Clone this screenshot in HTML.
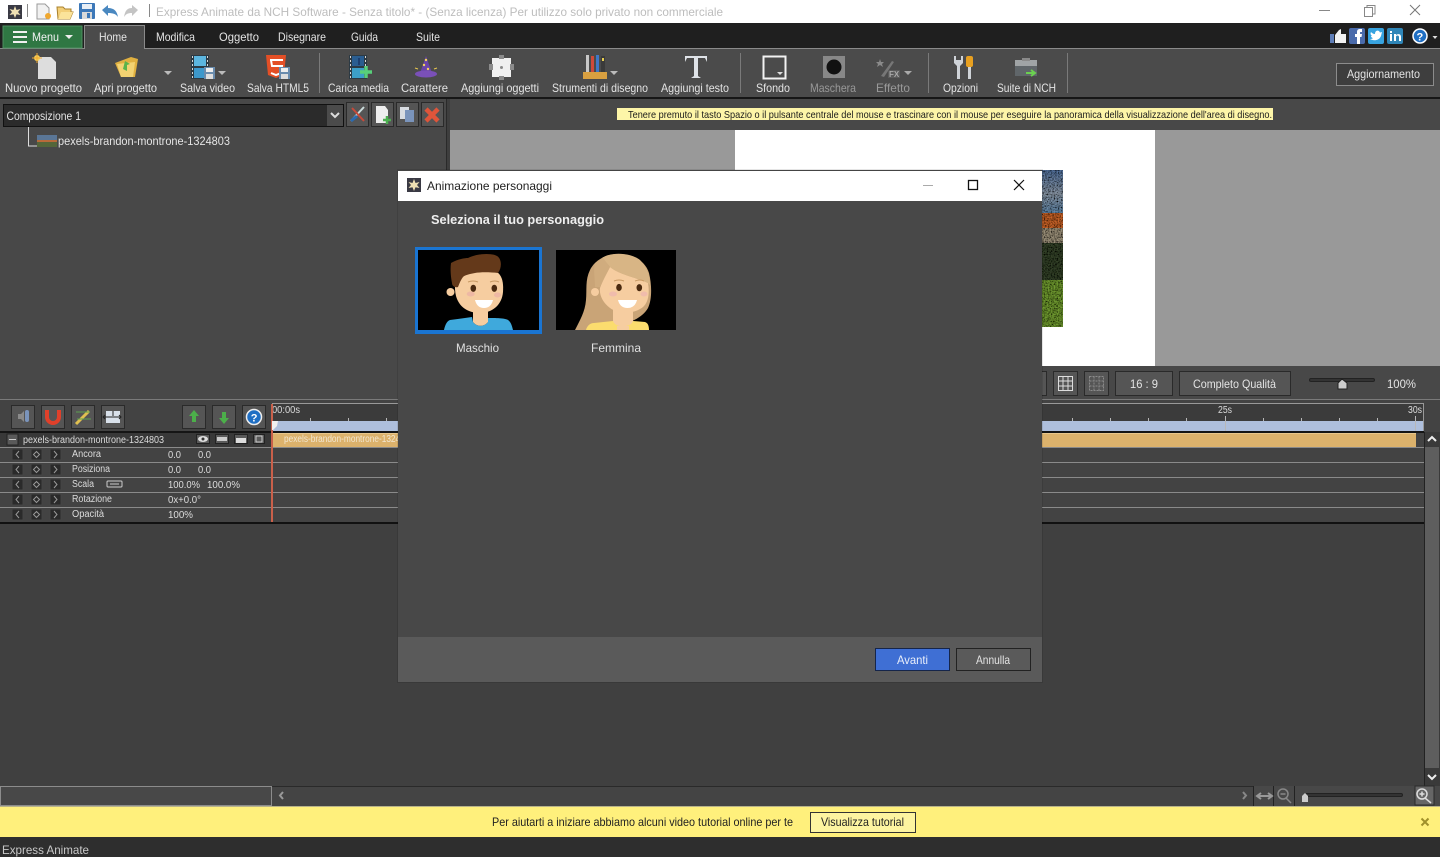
<!DOCTYPE html>
<html lang="it"><head><meta charset="utf-8"><title>Express Animate</title>
<style>
html,body{margin:0;padding:0;background:#404040;overflow:hidden}
svg{display:block;position:absolute;left:0;top:0}
text{font-family:"Liberation Sans",sans-serif;font-size:12px;fill:#e4e4e4;white-space:pre}
.s{font-size:10px;fill:#dcdcdc}
.d{fill:#999}
</style></head><body>
<svg width="1440" height="857" viewBox="0 0 1440 857" xmlns="http://www.w3.org/2000/svg">
<defs>
<filter id="grain" x="0" y="0" width="100%" height="100%"><feTurbulence type="fractalNoise" baseFrequency="0.7" numOctaves="2" seed="4"/><feColorMatrix values="0 0 0 0 0  0 0 0 0 0  0 0 0 0 0  0 0 0 -2.200 1.500"/><feComposite in2="SourceGraphic" operator="in"/><feMerge><feMergeNode in="SourceGraphic"/><feMergeNode/></feMerge></filter>
<linearGradient id="sky" x1="0" y1="0" x2="0" y2="1"><stop offset="0" stop-color="#51709c"/><stop offset=".55" stop-color="#8a97a6"/><stop offset="1" stop-color="#5f85a8"/></linearGradient>
<linearGradient id="clip" x1="0" y1="0" x2="1" y2="0"><stop offset="0" stop-color="#d8a468"/><stop offset="1" stop-color="#dcb26c"/></linearGradient>
</defs>
<!-- base -->
<rect width="1440" height="857" fill="#404040"/>
<rect width="1440" height="23" fill="#fff"/>
<rect y="23" width="1440" height="25" fill="#1f1f1f"/>
<rect y="48" width="1440" height="49" fill="#4b4b4b"/>
<rect y="48" width="1440" height="1" fill="#8a8a8a"/>
<rect y="97" width="1440" height="2" fill="#161616"/>
<!-- title bar -->
<rect x="8" y="5" width="14" height="14" fill="#3a3a44"/>
<path d="M15 6l1.500 4 4-1-2.500 3 2.500 3-4-.8L15 18l-1.500-3.800-4 .8 2.500-3-2.500-3 4 1z" fill="#efe0b4"/>
<rect x="27" y="4" width="1" height="13" fill="#888"/>
<path d="M37 4h8l4 4v11H37z" fill="#f1f1f1" stroke="#9a9a9a"/><circle cx="48" cy="16" r="3" fill="#f0a830"/>
<path d="M57 7h6l2 2h6v3h2l-3 7H58z" fill="#f3cf78" stroke="#a8802c"/><path d="M61 12h12l-3 7H58z" fill="#fbe39a"/>
<rect x="79" y="3" width="16" height="16" rx="1" fill="#3d78b8"/><rect x="82" y="4" width="10" height="5" fill="#e8eef5"/><rect x="82" y="12" width="10" height="7" fill="#d9d9d9"/><rect x="87" y="13" width="3" height="5" fill="#3d78b8"/>
<path d="M102 10l6-5v3c6 0 9 3 10 9-2-3-5-4-10-4v3z" fill="#4a88c0"/>
<path d="M138 10l-6-5v3c-5 0-7 3-8 9 2-3 4-4 8-4v3z" fill="#c4c4c4"/>
<rect x="149" y="4" width="1" height="13" fill="#888"/>
<text x="156" y="16" textLength="567" lengthAdjust="spacingAndGlyphs" style="fill:#bdbdbd">Express Animate da NCH Software - Senza titolo* - (Senza licenza) Per utilizzo solo privato non commerciale</text>
<rect x="1319" y="10" width="11" height="1" fill="#888"/>
<path d="M1364.500 7.500h8v9h-8zM1367 7.500V5.500h8v8.500h-2.500" fill="none" stroke="#888"/>
<path d="M1410 5l10 10M1420 5l-10 10" stroke="#777" fill="none"/>
<!-- menu tabs -->
<path d="M3 48V26h79v22z" fill="#2f7743" stroke="#4f8f61"/>
<path d="M13 32h14M13 37h14M13 42h14" stroke="#f0f0f0" stroke-width="2"/>
<text x="32" y="41" textLength="27" lengthAdjust="spacingAndGlyphs" style="fill:#f2f2f2">Menu</text>
<path d="M65 35h8l-4 4z" fill="#eee"/>
<rect x="84" y="25" width="61" height="24" fill="#4b4b4b"/>
<path d="M84.500 49V25.500h60V49" fill="none" stroke="#8a8a8a"/>
<text x="99" y="41" textLength="28" lengthAdjust="spacingAndGlyphs">Home</text>
<text x="156" y="41" textLength="39" lengthAdjust="spacingAndGlyphs">Modifica</text>
<text x="219" y="41" textLength="40" lengthAdjust="spacingAndGlyphs">Oggetto</text>
<text x="278" y="41" textLength="48" lengthAdjust="spacingAndGlyphs">Disegnare</text>
<text x="351" y="41" textLength="27" lengthAdjust="spacingAndGlyphs">Guida</text>
<text x="416" y="41" textLength="24" lengthAdjust="spacingAndGlyphs">Suite</text>
<!-- social -->
<rect x="1330" y="34" width="4" height="9" fill="#5f7eb8"/><path d="M1335 35l4-5 2-1v5h5v9h-11z" fill="#f2f2f2"/>
<rect x="1349" y="28" width="16" height="16" rx="2" fill="#4a6bab"/><path d="M1357 44v-7h-2v-3h2v-2c0-2 1-3 3-3h2v3h-1c-1 0-1 0-1 1v1h2l-.5 3H1360v7z" fill="#fff"/>
<rect x="1368" y="28" width="16" height="16" rx="2" fill="#37a3e0"/><path d="M1370 39c3 2 9 2 11-3l1-4-2 .5-1-1.500c-2-1-4 0-4 3-2 0-3-1-4-2-1 2 0 3 1 4l-1 0c0 1 1 2 2 2-1 1-2 1-3 1z" fill="#fff"/>
<rect x="1387" y="28" width="16" height="16" rx="2" fill="#2f86b8"/><path d="M1390 34h2v7h-2zM1390 31h2v2h-2zM1394 34h2v1c1-1 5-2 5 2v4h-2v-4c0-2-3-2-3 0v4h-2z" fill="#fff"/>
<circle cx="1420" cy="36" r="7" fill="#1f6fc4" stroke="#fff" stroke-width="1.500"/>
<text x="1416.500" y="40.500" style="font-size:11px;font-weight:bold;fill:#fff">?</text>
<path d="M1432.500 36h5l-2.500 3z" fill="#ddd"/>
<!-- toolbar icons -->
<path d="M38 57h13l5 5v17H38z" fill="#ddd"/><circle cx="37" cy="58" r="3" fill="#f6d25c"/><path d="M37 53v10M32 58h10" stroke="#f0a830"/>
<path d="M115 63l16-6 7 2-3 18h-14z" fill="#e0b040"/><path d="M117 64l18-2-2 15h-12z" fill="#f2d272"/><path d="M123 69l2-8 5 3-3 1 0 6z" fill="#5ab44a"/>
<path d="M164 71h8l-4 4z" fill="#bbb"/>
<rect x="191" y="55" width="18" height="24" fill="#2c3a44"/><rect x="194" y="56" width="12" height="10" fill="#5cb6e0"/><rect x="194" y="68" width="12" height="10" fill="#3c98cc"/><path d="M192.500 56v23M207.500 56v23" stroke="#d8d8d8" stroke-dasharray="2 2"/><rect x="204" y="67" width="11" height="12" fill="#6a8cae"/><rect x="206" y="68" width="7" height="4" fill="#eee"/><rect x="206" y="74" width="7" height="5" fill="#ddd"/>
<path d="M218 71h8l-4 4z" fill="#bbb"/>
<path d="M266 55h20l-2 20-8 3-8-3z" fill="#e34f26"/><path d="M270 60h13M271 60l1 6h10l-1 7-5 2-5-2" fill="none" stroke="#fff" stroke-width="2"/><rect x="279" y="67" width="11" height="12" fill="#6a8cae"/><rect x="281" y="68" width="7" height="4" fill="#eee"/><rect x="281" y="74" width="7" height="5" fill="#ddd"/>
<rect x="319" y="53" width="1" height="40" fill="#7a7a7a"/>
<rect x="349" y="55" width="18" height="24" fill="#2c3a44"/><rect x="352" y="56" width="12" height="10" fill="#2a5d90"/><rect x="352" y="68" width="12" height="10" fill="#3c9fc8"/><path d="M350.500 56v23M365.500 56v23" stroke="#d8d8d8" stroke-dasharray="2 2"/><path d="M359 58v7" stroke="#1d3f70" stroke-width="2"/><path d="M366 66v12M360 72h12" stroke="#58d07a" stroke-width="3.500"/>
<path d="M426 56l6 17h-12z" fill="#6a45a8"/><ellipse cx="426" cy="74" rx="11" ry="3.500" fill="#7a50b8"/><circle cx="424" cy="65" r="1.200" fill="#f6d25c"/><circle cx="428" cy="69" r="1.200" fill="#f6d25c"/><circle cx="426" cy="60" r="1.200" fill="#f6d25c"/><path d="M415 68l3 1M437 68l-3 1" stroke="#e8c850"/>
<rect x="492" y="58" width="19" height="19" fill="#f0f0f0"/><g fill="#8a8a8a"><rect x="489" y="64" width="4" height="6"/><rect x="510" y="64" width="4" height="6"/><rect x="499" y="55" width="5" height="4"/><rect x="499" y="76" width="5" height="4"/><circle cx="501.500" cy="67.500" r="1.500"/></g>
<rect x="583" y="72" width="24" height="7" fill="#d9a040"/><rect x="586" y="55" width="3" height="17" fill="#c8c8c8"/><rect x="591" y="56" width="3" height="16" fill="#d04a3a"/><rect x="596" y="55" width="3" height="17" fill="#3f78c8"/><rect x="601" y="56" width="4" height="16" fill="#3a3a3a"/><rect x="602" y="58" width="2" height="3" fill="#e8d050"/>
<path d="M610 71h8l-4 4z" fill="#bbb"/>
<path d="M685 56h22v6l-2-4h-7v18l3 2h-10l3-2V58h-7l-2 4z" fill="#dfe3e8"/>
<rect x="740" y="53" width="1" height="40" fill="#7a7a7a"/>
<rect x="763.500" y="56.500" width="22" height="22" fill="#4b4b4b" stroke="#f2f2f2" stroke-width="2"/><path d="M777 72h6l-3 3z" fill="#ddd"/>
<rect x="823" y="56" width="22" height="22" fill="#888"/><circle cx="834" cy="67" r="7.500" fill="#111"/>
<path d="M881 76l11-15 2 1-10 15z" fill="#777"/><path d="M880 59l1 3 3 0-2 2 1 3-3-2-3 2 1-3-2-2 3 0z" fill="#8a8a8a"/><rect x="888" y="70" width="12" height="8" fill="#5c5c5c"/><text x="889" y="77" class="s" style="font-size:8px;font-weight:bold;fill:#aaa">FX</text>
<path d="M904 71h8l-4 4z" fill="#aaa"/>
<rect x="928" y="53" width="1" height="40" fill="#7a7a7a"/>
<path d="M954 56v7l3 3v13h3V66l3-3v-7l-2 0v4h-5v-4z" fill="#cfd3d8"/><rect x="966" y="56" width="7" height="11" rx="2" fill="#e8a020"/><rect x="968" y="67" width="3" height="12" fill="#cfd3d8"/>
<rect x="1015" y="62" width="22" height="14" fill="#60666a"/><rect x="1015" y="60" width="22" height="6" fill="#a0a4a6"/><rect x="1022" y="58" width="8" height="3" fill="#8a8a8a"/><path d="M1026 73h8M1031 70l4 3-4 3" stroke="#6bd050" stroke-width="2" fill="none"/>
<rect x="1067" y="53" width="1" height="40" fill="#7a7a7a"/>
<!-- toolbar labels -->
<text x="5" y="92" textLength="77" lengthAdjust="spacingAndGlyphs">Nuovo progetto</text>
<text x="94" y="92" textLength="63" lengthAdjust="spacingAndGlyphs">Apri progetto</text>
<text x="180" y="92" textLength="55" lengthAdjust="spacingAndGlyphs">Salva video</text>
<text x="247" y="92" textLength="62" lengthAdjust="spacingAndGlyphs">Salva HTML5</text>
<text x="328" y="92" textLength="61" lengthAdjust="spacingAndGlyphs">Carica media</text>
<text x="401" y="92" textLength="47" lengthAdjust="spacingAndGlyphs">Carattere</text>
<text x="461" y="92" textLength="78" lengthAdjust="spacingAndGlyphs">Aggiungi oggetti</text>
<text x="552" y="92" textLength="96" lengthAdjust="spacingAndGlyphs">Strumenti di disegno</text>
<text x="661" y="92" textLength="68" lengthAdjust="spacingAndGlyphs">Aggiungi testo</text>
<text x="756" y="92" textLength="34" lengthAdjust="spacingAndGlyphs">Sfondo</text>
<text x="810" y="92" textLength="46" lengthAdjust="spacingAndGlyphs" class="d">Maschera</text>
<text x="876" y="92" textLength="34" lengthAdjust="spacingAndGlyphs" class="d">Effetto</text>
<text x="943" y="92" textLength="35" lengthAdjust="spacingAndGlyphs">Opzioni</text>
<text x="997" y="92" textLength="59" lengthAdjust="spacingAndGlyphs">Suite di NCH</text>
<rect x="1336.500" y="63.500" width="97" height="22" fill="#3e3e3e" stroke="#8c8c8c"/>
<text x="1347" y="78" textLength="73" lengthAdjust="spacingAndGlyphs">Aggiornamento</text>
<!-- left panel -->
<rect x="0" y="99" width="447" height="301" fill="#484848"/>
<rect x="446" y="99" width="1" height="301" fill="#2a2a2a"/>
<rect x="447" y="99" width="3" height="301" fill="#3e3e3e"/>
<rect x="3.500" y="104.500" width="340" height="22" fill="#2b2b2b" stroke="#111"/>
<rect x="327" y="105" width="16" height="21" fill="#4b4b4b"/>
<path d="M331 113l4 4 4-4" stroke="#ddd" stroke-width="2" fill="none"/>
<text x="6.500" y="120" textLength="74.500" lengthAdjust="spacingAndGlyphs">Composizione 1</text>
<g fill="#555" stroke="#2a2a2a"><rect x="346.500" y="102.500" width="22" height="24"/><rect x="371.500" y="102.500" width="22" height="24"/><rect x="396.500" y="102.500" width="22" height="24"/><rect x="421.500" y="102.500" width="22" height="24"/></g>
<path d="M351 121l13-14" stroke="#cdd" stroke-width="2"/><path d="M364 121l-12-13" stroke="#c84a3a" stroke-width="2"/><path d="M351 121l6-5" stroke="#2a6ab0" stroke-width="3"/>
<path d="M376 106h9l3 4v13h-12z" fill="#eee"/><path d="M387 116v8M383 120h8" stroke="#4caf50" stroke-width="2.500"/>
<rect x="400" y="107" width="9" height="12" fill="#d8dce2"/><rect x="405" y="110" width="9" height="12" fill="#7a94bc"/>
<path d="M426 109l12 12M438 109l-12 12" stroke="#e0553a" stroke-width="4.500"/>
<path d="M28.500 127v19H37" stroke="#ddd" fill="none"/>
<rect x="37" y="135" width="20" height="12" fill="#54663a"/><rect x="37" y="135" width="20" height="5" fill="#5a7696"/><rect x="37" y="140" width="20" height="2" fill="#b86a3a"/>
<text x="58" y="145" textLength="172" lengthAdjust="spacingAndGlyphs">pexels-brandon-montrone-1324803</text>
<!-- preview -->
<rect x="450" y="99" width="990" height="31" fill="#484848"/>
<rect x="617" y="108" width="656" height="12" fill="#fdf5a8"/>
<text x="628" y="118" textLength="644" lengthAdjust="spacingAndGlyphs" style="font-size:10.500px;fill:#1a1a1a">Tenere premuto il tasto Spazio o il pulsante centrale del mouse e trascinare con il mouse per eseguire la panoramica della visualizzazione dell'area di disegno.</text>
<rect x="450" y="130" width="990" height="236" fill="#999"/>
<rect x="735" y="130" width="420" height="236" fill="#fff"/>
<g filter="url(#grain)">
<rect x="1040" y="170" width="23" height="43" fill="url(#sky)"/>
<rect x="1040" y="213" width="23" height="15" fill="#c8642c"/>
<rect x="1040" y="228" width="23" height="15" fill="#9a8f78"/>
<rect x="1040" y="243" width="23" height="37" fill="#34422a"/>
<rect x="1040" y="280" width="23" height="47" fill="#6f9a30"/>
</g>
<!-- controls row -->
<rect x="450" y="366" width="990" height="34" fill="#484848"/>
<rect x="1020" y="371.500" width="26.500" height="24" fill="#555" stroke="#2a2a2a"/>
<rect x="1053.500" y="371.500" width="24" height="24" fill="#555" stroke="#2a2a2a"/>
<path d="M1058.500 376.500h14v14h-14zM1058.500 381h14M1058.500 386h14M1063 376.500v14M1068 376.500v14" fill="none" stroke="#ddd"/>
<rect x="1084.500" y="371.500" width="24" height="24" fill="#555" stroke="#2a2a2a"/>
<path d="M1089.500 376.500h14v14h-14zM1089.500 381h14M1089.500 386h14M1094 376.500v14M1099 376.500v14" fill="none" stroke="#8a8a8a" stroke-dasharray="2 1"/>
<rect x="1115.500" y="371.500" width="57" height="24" fill="#555" stroke="#2a2a2a"/>
<text x="1130" y="388" textLength="28" lengthAdjust="spacingAndGlyphs">16 : 9</text>
<rect x="1179.500" y="371.500" width="111" height="24" fill="#555" stroke="#2a2a2a"/>
<text x="1193" y="388" textLength="83" lengthAdjust="spacingAndGlyphs">Completo Qualità</text>
<rect x="1309.500" y="378.500" width="65" height="3" rx="1.500" fill="#333" stroke="#222"/>
<path d="M1338 383l4-4 5 4v6h-9z" fill="#ccc" stroke="#222"/>
<text x="1387" y="388" textLength="29" lengthAdjust="spacingAndGlyphs">100%</text>
<!-- timeline -->
<rect x="0" y="400" width="1440" height="123" fill="#434343"/>
<rect x="0" y="399" width="1440" height="1" fill="#7a7a7a"/>
<g fill="#555" stroke="#2a2a2a"><rect x="11.500" y="405.500" width="23" height="23"/><rect x="41.500" y="405.500" width="23" height="23"/><rect x="71.500" y="405.500" width="23" height="23"/><rect x="101.500" y="405.500" width="23" height="23"/><rect x="182.500" y="405.500" width="23" height="23"/><rect x="212.500" y="405.500" width="23" height="23"/><rect x="242.500" y="405.500" width="23" height="23"/></g>
<path d="M18 414h3l3-3v11l-3-3h-3z" fill="#8a8a8a"/><rect x="25" y="410" width="4" height="12" rx="2" fill="#7a94bc"/>
<path d="M47 410v7a6 6 0 0 0 12 0v-7" fill="none" stroke="#e0402a" stroke-width="4"/>
<path d="M76 424l13-13" stroke="#e0c050" stroke-width="3"/><path d="M76 412h14M77 419h14" stroke="#5aa050"/>
<rect x="106" y="411" width="14" height="12" fill="#d8e0ea"/><path d="M103 417h18M105 415l-2 2 2 2M119 415l2 2-2 2M113 411v5" stroke="#222" fill="none"/>
<path d="M194 410l5 6h-3v6h-4v-6h-3z" fill="#4caf4a"/>
<path d="M224 424l5-6h-3v-6h-4v6h-3z" fill="#4caf4a"/>
<circle cx="254" cy="417" r="7.500" fill="#1f6fc4" stroke="#eee" stroke-width="1.500"/>
<text x="250.800" y="421.500" style="font-size:11px;font-weight:bold;fill:#fff">?</text>
<rect x="272" y="403" width="1152" height="1" fill="#999"/>
<rect x="273" y="404" width="1150" height="17" fill="#3b3b3b"/>
<rect x="272" y="421" width="1151" height="10" fill="#aebfdc"/>
<rect x="1423" y="403" width="1" height="29" fill="#999"/>
<path d="M1072.500 418v3M1110.500 418v3M1148.500 418v3M1186.500 418v3M1263.500 418v3M1301.500 418v3M1339.500 418v3M1377.500 418v3M1225.500 416v15M1415.500 416v15M310.500 418v3M348.500 418v3M386.500 418v3" stroke="#b8b8b8" fill="none"/>
<text x="272" y="413" textLength="28" lengthAdjust="spacingAndGlyphs" class="s">00:00s</text>
<text x="1218" y="413" textLength="14" lengthAdjust="spacingAndGlyphs" class="s">25s</text>
<text x="1408" y="413" textLength="14" lengthAdjust="spacingAndGlyphs" class="s">30s</text>
<rect x="0" y="431" width="1424" height="2" fill="#151515"/>
<rect x="0" y="433" width="272" height="14" fill="#383838"/>
<rect x="7" y="434" width="11" height="11" fill="#5a5a5a" stroke="#222"/><rect x="9" y="439" width="7" height="1" fill="#ccc"/>
<text x="23" y="443" textLength="141" lengthAdjust="spacingAndGlyphs" class="s">pexels-brandon-montrone-1324803</text>
<g fill="#5a5a5a" stroke="#222"><rect x="196.500" y="434.500" width="13" height="9"/><rect x="215.500" y="434.500" width="13" height="9"/><rect x="234.500" y="434.500" width="13" height="9"/><rect x="253.500" y="434.500" width="11" height="9"/></g>
<ellipse cx="203" cy="439" rx="5" ry="3" fill="#ddd"/><circle cx="203" cy="439" r="1.500" fill="#333"/>
<rect x="217" y="437" width="10" height="4" fill="#ccc"/><rect x="236" y="438" width="10" height="5" fill="#ddd"/><rect x="256" y="436" width="6" height="6" fill="none" stroke="#ccc"/>
<rect x="273" y="433" width="1143" height="14" fill="#dcb26c"/>
<rect x="273" y="433" width="1143" height="1" fill="#e8c78c"/>
<text x="284" y="442" textLength="130" lengthAdjust="spacingAndGlyphs" class="s" style="fill:#f2e6cf">pexels-brandon-montrone-1324803</text>
<g fill="#8a8a8a"><rect y="447" width="1424" height="1"/><rect y="462" width="1424" height="1"/><rect y="477" width="1424" height="1"/><rect y="492" width="1424" height="1"/><rect y="507" width="1424" height="1"/></g>
<rect y="522" width="1424" height="2" fill="#111"/>
<!-- rows -->
<g fill="#2a2a2a" stroke="#444"><rect x="12" y="449" width="11" height="11"/><rect x="31" y="449" width="11" height="11"/><rect x="50" y="449" width="11" height="11"/><rect x="12" y="464" width="11" height="11"/><rect x="31" y="464" width="11" height="11"/><rect x="50" y="464" width="11" height="11"/><rect x="12" y="479" width="11" height="11"/><rect x="31" y="479" width="11" height="11"/><rect x="50" y="479" width="11" height="11"/><rect x="12" y="494" width="11" height="11"/><rect x="31" y="494" width="11" height="11"/><rect x="50" y="494" width="11" height="11"/><rect x="12" y="509" width="11" height="11"/><rect x="31" y="509" width="11" height="11"/><rect x="50" y="509" width="11" height="11"/></g>
<path d="M19 451l-3 3.500 3 3.500M54 451l3 3.500-3 3.500M36.500 451.500l3 3-3 3-3-3zM19 466l-3 3.500 3 3.500M54 466l3 3.500-3 3.500M36.500 466.500l3 3-3 3-3-3zM19 481l-3 3.500 3 3.500M54 481l3 3.500-3 3.500M36.500 481.500l3 3-3 3-3-3zM19 496l-3 3.500 3 3.500M54 496l3 3.500-3 3.500M36.500 496.500l3 3-3 3-3-3zM19 511l-3 3.500 3 3.500M54 511l3 3.500-3 3.500M36.500 511.500l3 3-3 3-3-3z" fill="none" stroke="#999"/>
<text x="72" y="457" textLength="29" lengthAdjust="spacingAndGlyphs" class="s">Ancora</text>
<text x="72" y="472" textLength="38" lengthAdjust="spacingAndGlyphs" class="s">Posiziona</text>
<text x="72" y="487" textLength="22" lengthAdjust="spacingAndGlyphs" class="s">Scala</text>
<rect x="107" y="481" width="15" height="6" rx="1" fill="#444" stroke="#ccc"/><path d="M110 484h9" stroke="#ccc"/>
<text x="72" y="502" textLength="40" lengthAdjust="spacingAndGlyphs" class="s">Rotazione</text>
<text x="72" y="517" textLength="32" lengthAdjust="spacingAndGlyphs" class="s">Opacità</text>
<text x="168" y="458" textLength="13" lengthAdjust="spacingAndGlyphs" class="s">0.0</text><text x="198" y="458" textLength="13" lengthAdjust="spacingAndGlyphs" class="s">0.0</text>
<text x="168" y="473" textLength="13" lengthAdjust="spacingAndGlyphs" class="s">0.0</text><text x="198" y="473" textLength="13" lengthAdjust="spacingAndGlyphs" class="s">0.0</text>
<text x="168" y="488" textLength="32" lengthAdjust="spacingAndGlyphs" class="s">100.0%</text><text x="207" y="488" textLength="33" lengthAdjust="spacingAndGlyphs" class="s">100.0%</text>
<text x="168" y="503" textLength="33" lengthAdjust="spacingAndGlyphs" class="s">0x+0.0°</text>
<text x="168" y="518" textLength="25" lengthAdjust="spacingAndGlyphs" class="s">100%</text>
<rect x="271" y="404" width="2" height="118" fill="#c9604a"/>
<path d="M272 421h6l-1 5-4 4h-1z" fill="#f0f0f0"/>
<!-- right scrollbar -->
<rect x="1424" y="432" width="16" height="354" fill="#3a3a3a"/>
<rect x="1424" y="432" width="1" height="354" fill="#222"/>
<rect x="1425" y="447" width="14" height="321" fill="#5e5e5e"/>
<path d="M1428 441l4-4 4 4" stroke="#eee" stroke-width="2" fill="none"/>
<path d="M1428 775l4 4 4-4" stroke="#eee" stroke-width="2" fill="none"/>
<!-- bottom scroll -->
<rect x="0" y="786" width="1440" height="20" fill="#484848"/>
<rect x="0" y="786" width="1253" height="1" fill="#2a2a2a"/>
<rect x="0.500" y="786.500" width="271" height="19" fill="#484848" stroke="#8c8c8c"/>
<rect x="272" y="787" width="981" height="19" fill="#444"/>
<path d="M283 792l-3 3.500 3 3.500" stroke="#999" stroke-width="2" fill="none"/>
<path d="M1243 792l3 3.500-3 3.500" stroke="#888" stroke-width="2" fill="none"/>
<rect x="1253" y="786" width="1" height="20" fill="#222"/><rect x="1273" y="786" width="1" height="20" fill="#222"/><rect x="1294" y="786" width="1" height="20" fill="#222"/>
<path d="M1258 796h13M1261 793l-4 3 4 3M1268 793l4 3-4 3" stroke="#999" stroke-width="2" fill="none"/>
<circle cx="1283" cy="794" r="5" fill="none" stroke="#888" stroke-width="1.500"/><path d="M1286 798l5 5M1280.500 794h5" stroke="#888" stroke-width="1.500"/>
<rect x="1305.500" y="793.500" width="97" height="3" rx="1.500" fill="#333" stroke="#222"/>
<path d="M1302 796l3-3 3 3v6h-6z" fill="#ccc"/>
<rect x="1415" y="786" width="19" height="19" fill="#666" stroke="#2a2a2a"/>
<circle cx="1422" cy="794" r="5" fill="none" stroke="#ddd" stroke-width="1.500"/><path d="M1425 798l6 5M1419.500 794h5M1422 791.500v5" stroke="#ddd" stroke-width="1.500"/>
<!-- notification -->
<rect x="0" y="806" width="1440" height="1" fill="#b8b38a"/>
<rect x="0" y="807" width="1440" height="30" fill="#fff07c"/>
<text x="492" y="826" textLength="301" lengthAdjust="spacingAndGlyphs" style="fill:#222">Per aiutarti a iniziare abbiamo alcuni video tutorial online per te</text>
<rect x="810.500" y="812.500" width="105" height="20" fill="#fdf4a0" stroke="#333"/>
<text x="821" y="826" textLength="83" lengthAdjust="spacingAndGlyphs" style="fill:#222">Visualizza tutorial</text>
<path d="M1421.500 818.500l7 7M1428.500 818.500l-7 7" stroke="#a0902a" stroke-width="2"/>
<rect x="0" y="837" width="1440" height="20" fill="#2e2e2e"/>
<text x="2" y="854" textLength="87" lengthAdjust="spacingAndGlyphs" style="fill:#c8c8c8">Express Animate</text>
<!-- dialog -->
<rect x="397" y="169" width="646" height="514" fill="#000" opacity=".1"/>
<rect x="398" y="170" width="644" height="512" fill="#484848"/>
<rect x="398" y="170" width="644" height="1" fill="#444"/>
<rect x="398" y="171" width="644" height="30" fill="#fff"/>
<rect x="407" y="178" width="14" height="14" fill="#3a3a44"/>
<path d="M414 179l1.500 4 4-1-2.500 3 2.500 3-4-.8L414 191l-1.500-3.800-4 .8 2.500-3-2.500-3 4 1z" fill="#efe0b4"/>
<text x="427" y="190" textLength="125" lengthAdjust="spacingAndGlyphs" style="fill:#222">Animazione personaggi</text>
<rect x="923" y="185" width="10" height="1" fill="#aaa"/>
<rect x="968.500" y="180.500" width="9" height="9" fill="none" stroke="#111" stroke-width="1.300"/>
<path d="M1014 180l10 10M1024 180l-10 10" stroke="#111" stroke-width="1.200"/>
<text x="431" y="224" textLength="173" lengthAdjust="spacingAndGlyphs" style="font-size:13px;font-weight:bold;fill:#eee">Seleziona il tuo personaggio</text>
<!-- male -->
<rect x="415" y="247" width="127" height="87" fill="#1a75d2"/>
<rect x="418" y="250" width="121" height="80" fill="#000"/>
<path d="M444 330C445 325 447 321 450 320C458 319 465 318 472 317L473 322C477 327 484 327 488 322L488 318C495 318 505 318 508 320C511 322 512 326 513 330z" fill="#3fa9dc"/>
<path d="M473 307L473 322C477 327 484 327 488 322L488 307z" fill="#f6cda0"/>
<circle cx="450.500" cy="292" r="4" fill="#f6cda0"/>
<path d="M458 270C500 262 504 275 503 292C502 305 492 313 480 313C468 313 459 307 456 296C454 288 455 278 458 270z" fill="#f6cda0"/>
<path d="M451 263C458 259 465 258 468 258C478 253 492 253 497 256C502 259 502 268 498 273C490 272 480 272 475 273C470 274 465 275 463 277C460 281 459 285 458 287C455 288 452 286 452 283C451 278 450 270 451 263z" fill="#64391a"/>
<ellipse cx="473.300" cy="288.300" rx="2.800" ry="3.600" fill="#4a2a10"/>
<ellipse cx="494.300" cy="288.300" rx="2.800" ry="3.600" fill="#4a2a10"/>
<path d="M468 282q5-2 10 0M490 282q5-2 9 0" stroke="#c89a64" fill="none"/>
<ellipse cx="470.700" cy="294" rx="4" ry="2.500" fill="#eeb8a4"/><ellipse cx="497.500" cy="295" rx="3.500" ry="2.500" fill="#eeb8a4"/>
<path d="M475 300h18q-2 8-9 8t-9-8z" fill="#fff"/>
<text x="456" y="352" textLength="43" lengthAdjust="spacingAndGlyphs" style="fill:#e0e0e0">Maschio</text>
<!-- female -->
<rect x="556" y="250" width="120" height="80" fill="#000"/>
<path d="M575 330C580 320 585 312 586 300C587 290 585 280 590 270C595 260 606 254 618 254C632 254 645 260 649 273C652 285 652 300 648 308C644 315 636 320 629 322L586 330z" fill="#c9a477"/>
<path d="M613 305L613 322C615 329 631 329 633 322L633 305z" fill="#f6cda0"/>
<path d="M586 330C587 326 590 323 594 323L613 321C615 328 631 328 633 321L645 322C648 323 649 326 649 330z" fill="#fbdc6e"/>
<rect x="617" y="326" width="12" height="4" fill="#f6cda0"/>
<circle cx="595" cy="292" r="4" fill="#f6cda0"/>
<path d="M610 267C620 275 635 277 648 283C650 295 648 305 640 309C632 314 618 314 610 308C603 303 599 295 600 288C603 280 606 275 610 267z" fill="#f6cda0"/>
<path d="M602 258C610 252 630 252 640 260C647 267 650 275 650 285L648 283C635 277 620 275 610 267C606 262 604 260 602 258z" fill="#d8b585"/>
<path d="M595 263L603 258L610 267C606 275 603 280 600 287L595 287C595 278 593 270 595 263z" fill="#d0ac7e"/>
<ellipse cx="619" cy="287.500" rx="2.800" ry="3.600" fill="#4a2a10"/>
<ellipse cx="639.300" cy="287.700" rx="2.800" ry="3.600" fill="#4a2a10"/>
<path d="M614 281q5-2 10 0M635 281q5-2 9 0" stroke="#c89a64" fill="none"/>
<ellipse cx="613" cy="294" rx="4" ry="2.500" fill="#f0bcac"/><ellipse cx="644" cy="294" rx="3.500" ry="2.500" fill="#f0bcac"/>
<path d="M618 300h19q-2 8-9.500 8t-9.500-8z" fill="#fff"/>
<text x="591" y="352" textLength="50" lengthAdjust="spacingAndGlyphs" style="fill:#e0e0e0">Femmina</text>
<!-- footer -->
<rect x="398" y="637" width="644" height="45" fill="#5a5a5a"/>
<rect x="875.500" y="648.500" width="74" height="22" fill="#3f6fd4" stroke="#15254a"/>
<text x="897" y="664" textLength="31" lengthAdjust="spacingAndGlyphs" style="fill:#e8eefa">Avanti</text>
<rect x="956.500" y="648.500" width="74" height="22" fill="#5a5a5a" stroke="#222"/>
<text x="976" y="664" textLength="34" lengthAdjust="spacingAndGlyphs">Annulla</text>
</svg>
</body></html>
